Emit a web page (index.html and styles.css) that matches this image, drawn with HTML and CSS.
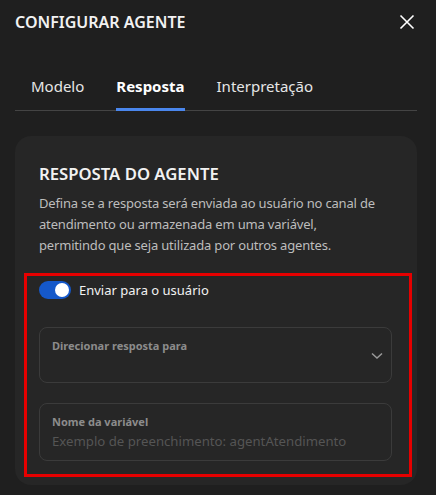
FILE: index.html
```html
<!DOCTYPE html>
<html lang="pt-BR">

<head>
    <meta charset="UTF-8">
    <meta name="viewport" content="width=device-width, initial-scale=1.0">
    <title>Configurar agente</title>
    <link rel="stylesheet" href="styles.css">
</head>

<body>
    <div class="panel">
        <header class="panel-header">
            <h1>CONFIGURAR AGENTE</h1>
            <button class="close" aria-label="Fechar">
                <svg width="16" height="16" viewBox="0 0 16 16">
                    <path d="M1.5 1.5 L14.5 14.5 M14.5 1.5 L1.5 14.5" stroke="#fff" stroke-width="1.6" fill="none" />
                </svg>
            </button>
        </header>

        <nav class="tabs">
            <a href="#" class="tab">Modelo</a>
            <a href="#" class="tab active">Resposta</a>
            <a href="#" class="tab">Interpretação</a>
        </nav>

        <section class="card">
            <h2>RESPOSTA DO AGENTE</h2>
            <p class="desc">Defina se a resposta será enviada ao usuário no canal de atendimento ou armazenada em uma variável,<br>permitindo que seja utilizada por outros agentes.</p>

            <div class="highlight">
                <label class="switch-row">
                    <span class="switch on"><span class="knob"></span></span>
                    <span>Enviar para o usuário</span>
                </label>

                <div class="field select">
                    <span class="field-label">Direcionar resposta para</span>
                    <svg class="chevron" width="12" height="8" viewBox="0 0 12 8">
                        <path d="M1 1.5 L6 6 L11 1.5" stroke="#9a9a9a" stroke-width="1.5" fill="none" />
                    </svg>
                </div>

                <div class="field">
                    <span class="field-label">Nome da variável</span>
                    <input type="text" placeholder="Exemplo de preenchimento: agentAtendimento">
                </div>
            </div>
        </section>
    </div>
</body>

</html>
```

FILE: styles.css
```css
body {
    font-family: 'Noto Sans', sans-serif;
    background-color: #1f1f1f;
    color: #f2f2f2;
    margin: 0;
    padding: 0;
}

.panel {
    padding: 0 19px 0 15px;
}

.panel-header {
    display: flex;
    justify-content: space-between;
    align-items: center;
    height: 44px;
}

.panel-header h1 {
    margin: 0;
    font-size: 16px;
    font-weight: 600;
}

.close {
    background: none;
    border: none;
    padding: 0;
    margin-right: 2px;
    display: flex;
    cursor: pointer;
}

.tabs {
    display: flex;
    gap: 32px;
    margin-top: 32px;
    padding-left: 16px;
    border-bottom: 1px solid #444;
}

.tab {
    text-decoration: none;
    color: #e6e6e6;
    font-size: 15px;
    padding-bottom: 12px;
    border-bottom: 3px solid transparent;
    margin-bottom: -1px;
}

.tab.active {
    color: #fff;
    font-weight: 700;
    border-bottom-color: #4a86ec;
}

.card {
    background-color: #262626;
    border-radius: 16px;
    margin-top: 25px;
    padding: 26px 24px 8px;
}

.card h2 {
    margin: 0;
    font-size: 16.7px;
    font-weight: 600;
}

.desc {
    margin: 8px 0 0;
    font-size: 13px;
    line-height: 21px;
    letter-spacing: -0.18px;
    color: #bdbdbd;
}

.highlight {
    border: 3px solid #e60000;
    margin: 17px -19px 0 -15px;
    padding: 5px 17px 13px 12px;
}

.switch-row {
    display: flex;
    align-items: center;
    gap: 8px;
    font-size: 13px;
    color: #f2f2f2;
}

.switch {
    width: 32px;
    height: 18px;
    border-radius: 9px;
    background-color: #1558c9;
    display: flex;
    align-items: center;
    justify-content: flex-end;
    padding: 0 2px;
    box-sizing: border-box;
}

.knob {
    width: 14px;
    height: 14px;
    border-radius: 50%;
    background-color: #fff;
}

.field {
    position: relative;
    border: 1px solid #3b3b3b;
    border-radius: 8px;
    padding: 10px 12px 0;
    box-sizing: border-box;
}

.field.select {
    margin-top: 28px;
    height: 56px;
}

.field + .field {
    margin-top: 20px;
    height: 58px;
}

.field-label {
    display: block;
    font-size: 11px;
    font-weight: 700;
    color: #8c8c8c;
}

.chevron {
    position: absolute;
    right: 8px;
    top: 24px;
}

.field input {
    display: block;
    width: 100%;
    background: none;
    border: none;
    outline: none;
    padding: 0;
    margin-top: 3px;
    font-family: inherit;
    font-size: 13.2px;
    color: #f2f2f2;
}

.field input::placeholder {
    color: #555;
}
```
